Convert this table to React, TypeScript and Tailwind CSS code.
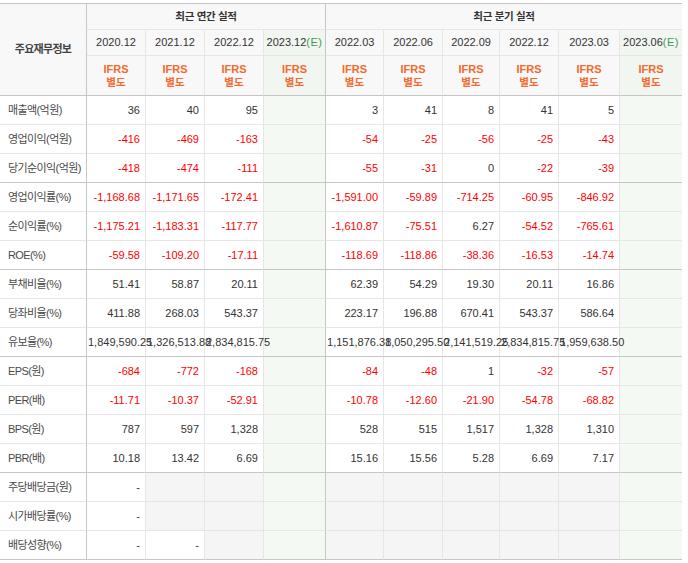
import React from 'react';

type Row = { label: string; vals: (string | null)[]; end?: boolean; div?: boolean };

const R = (label: string, a: (string | null)[], q: (string | null)[], end = false, div = false): Row => ({
  label,
  vals: [...a, ...q],
  end,
  div,
});

const rows: Row[] = [
  R('매출액(억원)', ['36', '40', '95', null], ['3', '41', '8', '41', '5', null]),
  R('영업이익(억원)', ['-416', '-469', '-163', null], ['-54', '-25', '-56', '-25', '-43', null]),
  R('당기순이익(억원)', ['-418', '-474', '-111', null], ['-55', '-31', '0', '-22', '-39', null], true),
  R('영업이익률(%)', ['-1,168.68', '-1,171.65', '-172.41', null], ['-1,591.00', '-59.89', '-714.25', '-60.95', '-846.92', null]),
  R('순이익률(%)', ['-1,175.21', '-1,183.31', '-117.77', null], ['-1,610.87', '-75.51', '6.27', '-54.52', '-765.61', null]),
  R('ROE(%)', ['-59.58', '-109.20', '-17.11', null], ['-118.69', '-118.86', '-38.36', '-16.53', '-14.74', null], true),
  R('부채비율(%)', ['51.41', '58.87', '20.11', null], ['62.39', '54.29', '19.30', '20.11', '16.86', null]),
  R('당좌비율(%)', ['411.88', '268.03', '543.37', null], ['223.17', '196.88', '670.41', '543.37', '586.64', null]),
  R('유보율(%)', ['1,849,590.25', '1,326,513.88', '2,834,815.75', null], ['1,151,876.38', '1,050,295.50', '2,141,519.25', '2,834,815.75', '1,959,638.50', null], true),
  R('EPS(원)', ['-684', '-772', '-168', null], ['-84', '-48', '1', '-32', '-57', null]),
  R('PER(배)', ['-11.71', '-10.37', '-52.91', null], ['-10.78', '-12.60', '-21.90', '-54.78', '-68.82', null]),
  R('BPS(원)', ['787', '597', '1,328', null], ['528', '515', '1,517', '1,328', '1,310', null]),
  R('PBR(배)', ['10.18', '13.42', '6.69', null], ['15.16', '15.56', '5.28', '6.69', '7.17', null], true),
  R('주당배당금(원)', ['-', null, null, null], [null, null, null, null, null, null], false, true),
  R('시가배당률(%)', ['-', null, null, null], [null, null, null, null, null, null], false, true),
  R('배당성향(%)', ['-', '-', null, null], [null, null, null, null, null, null], true, true),
];

const dates = ['2020.12', '2021.12', '2022.12', '2023.12', '2022.03', '2022.06', '2022.09', '2022.12', '2023.03', '2023.06'];

const rightBorder = (i: number) =>
  i === 3 ? 'border-r border-r-[#c6c6c6]' : i === 9 ? '' : 'border-r border-r-[#e6e6e6]';

const isE = (i: number) => i === 3 || i === 9;

export default function App() {
  return (
    <div className="w-[688px] h-[563px] bg-white overflow-hidden [font-family:'Liberation_Sans','Noto_Sans_CJK_KR',sans-serif]">
      <table className="mt-[3px] w-[682px] table-fixed border-separate border-spacing-0 border-t border-t-[#c6c6c6]">
        <colgroup>
          <col className="w-[87px]" />
          <col className="w-[59px]" />
          <col className="w-[59px]" />
          <col className="w-[59px]" />
          <col className="w-[62px]" />
          <col className="w-[58px]" />
          <col className="w-[59px]" />
          <col className="w-[57px]" />
          <col className="w-[59px]" />
          <col className="w-[61px]" />
          <col className="w-[62px]" />
        </colgroup>
        <thead>
          <tr className="h-[26px]">
            <th
              rowSpan={3}
              className="bg-[#f8f8f8] border-r border-r-[#c6c6c6] border-b border-b-[#c6c6c6] text-[11px] tracking-[-0.7px] font-bold text-[#444] text-center align-middle p-0"
            >
              주요재무정보
            </th>
            <th
              colSpan={4}
              className="bg-[#f8f8f8] border-r border-r-[#c6c6c6] border-b border-b-[#e6e6e6] text-[10.5px] tracking-[-0.3px] font-bold text-[#333] text-center align-middle p-0"
            >
              최근 연간 실적
            </th>
            <th
              colSpan={6}
              className="bg-[#f8f8f8] border-b border-b-[#e6e6e6] text-[10.5px] tracking-[-0.3px] font-bold text-[#333] text-center align-middle p-0"
            >
              최근 분기 실적
            </th>
          </tr>
          <tr className="h-[26px]">
            {dates.map((d, i) => (
              <th
                key={i}
                className={`${isE(i) ? 'bg-[#f1f6f1]' : 'bg-[#f8f8f8]'} ${rightBorder(i)} border-b border-b-[#e6e6e6] text-[11px] font-normal text-[#333] text-center align-middle whitespace-nowrap p-0`}
              >
                {d}
                {isE(i) && <span className="text-[#3e9a52] tracking-[0.5px]">(E)</span>}
              </th>
            ))}
          </tr>
          <tr className="h-[40px]">
            {dates.map((_, i) => (
              <th
                key={i}
                className={`${isE(i) ? 'bg-[#f1f6f1]' : 'bg-[#f8f8f8]'} ${rightBorder(i)} border-b border-b-[#c6c6c6] text-[11px] font-bold leading-[13px] text-[#f26a2e] text-center align-middle p-0`}
              >
                <div>IFRS</div>
                <div className="text-[10.5px]">별도</div>
              </th>
            ))}
          </tr>
        </thead>
        <tbody>
          {rows.map((r, ri) => {
            const bb = r.end ? 'border-b border-b-[#c6c6c6]' : 'border-b border-b-[#e6e6e6]';
            return (
              <tr key={ri} className="h-[29px]">
                <td
                  className={`bg-white border-r border-r-[#c6c6c6] ${bb} pl-[8px] text-[11px] tracking-[-0.6px] text-[#4a4a4a] text-left align-middle whitespace-nowrap`}
                >
                  {r.label}
                </td>
                {r.vals.map((v, i) => {
                  const bg = isE(i) ? 'bg-[#f4f9f4]' : v === null && r.div ? 'bg-[#f5f5f5]' : 'bg-white';
                  const neg = v !== null && v.startsWith('-') && v.length > 1;
                  return (
                    <td
                      key={i}
                      className={`${bg} ${rightBorder(i)} ${bb} pl-[1px] pr-[5px] text-[11px] text-right align-middle whitespace-nowrap ${neg ? 'text-[#ff0000]' : 'text-[#333]'}`}
                    >
                      {v ?? ''}
                    </td>
                  );
                })}
              </tr>
            );
          })}
        </tbody>
      </table>
    </div>
  );
}
